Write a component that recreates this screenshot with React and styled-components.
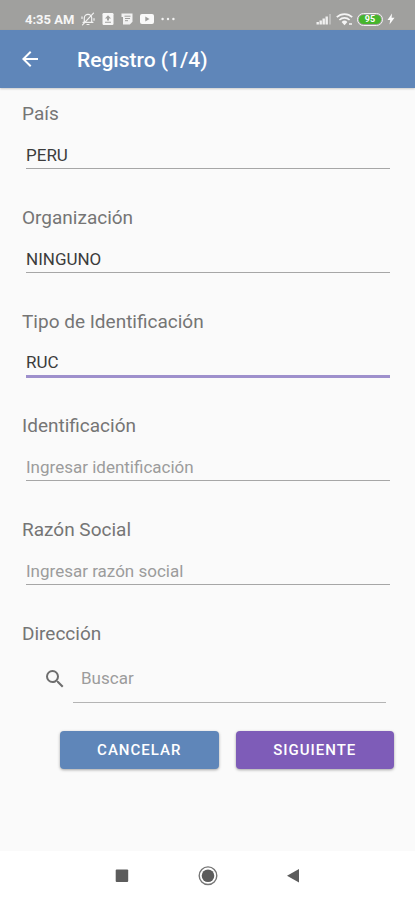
import styled, { createGlobalStyle } from "styled-components"
import { MdArrowBack, MdSearch } from "react-icons/md"

const campos = [
  { id: "pais", label: "País", valor: "PERU" },
  { id: "organizacion", label: "Organización", valor: "NINGUNO" },
  { id: "tipo", label: "Tipo de Identificación", valor: "RUC", activo: true },
  { id: "identificacion", label: "Identificación", placeholder: "Ingresar identificación" },
  { id: "razon", label: "Razón Social", placeholder: "Ingresar razón social" },
]

export default function App() {
  return (
    <Screen>
      <GlobalStyle />
      <StatusBar>
        <StatusGroup>
          <span>4:35 AM</span>
          <MutedIcon />
          <UploadIcon />
          <NoteIcon />
          <VideoIcon />
          <DotsIcon />
        </StatusGroup>
        <StatusIcons>
          <SignalIcon />
          <WifiIcon />
          <Battery><BatteryLevel>95</BatteryLevel></Battery>
          <BoltIcon />
        </StatusIcons>
      </StatusBar>

      <Header>
        <BackButton type="button" aria-label="Volver"><MdArrowBack /></BackButton>
        <h1>Registro (1/4)</h1>
      </Header>

      <Form onSubmit={(e) => e.preventDefault()}>
        {campos.map((campo) => (
          <Field key={campo.id}>
            <Label htmlFor={campo.id}>{campo.label}</Label>
            <Input
              id={campo.id}
              type="text"
              defaultValue={campo.valor}
              placeholder={campo.placeholder}
              $activo={campo.activo}
            />
          </Field>
        ))}

        <Label htmlFor="direccion">Dirección</Label>
        <SearchRow>
          <MdSearch />
          <SearchInput id="direccion" type="search" placeholder="Buscar" />
        </SearchRow>

        <ButtonsContainer>
          <Button type="button" $color="#5f86b9">Cancelar</Button>
          <Button type="submit" $color="#7e5cb8">Siguiente</Button>
        </ButtonsContainer>
      </Form>

      <NavBar>
        <NavButton type="button" aria-label="Recientes">
          <svg width="20" height="20" viewBox="0 0 20 20"><rect x="3.7" y="3.5" width="12.5" height="12.5" rx="1" fill="#5c5c5c" /></svg>
        </NavButton>
        <NavButton type="button" aria-label="Inicio">
          <svg width="20" height="20" viewBox="0 0 20 20">
            <circle cx="10" cy="9.7" r="8.8" fill="none" stroke="#757575" strokeWidth="1.4" />
            <circle cx="10" cy="9.7" r="6.3" fill="#5c5c5c" />
          </svg>
        </NavButton>
        <NavButton type="button" aria-label="Atrás">
          <svg width="20" height="20" viewBox="0 0 20 20"><path d="M3 9.7L15 3v13.4z" fill="#5c5c5c" /></svg>
        </NavButton>
      </NavBar>
    </Screen>
  )
}

function MutedIcon() {
  return (
    <svg width="14" height="14" viewBox="0 0 14 14" fill="none" stroke="#f2f2f2" strokeWidth="1.2" strokeLinecap="round">
      <path d="M3.3 9.8V6a3.7 3.7 0 0 1 7.4 0v3.8M2 10.3h10M6 12.5h2M1.5 12.8L12.5 1.2M1 6.5V4.8M13 6.5v1.7" />
    </svg>
  )
}

function UploadIcon() {
  return (
    <svg width="12" height="12" viewBox="0 0 12 12">
      <rect x="0.5" width="11" height="12" rx="1.2" fill="#f6f6f6" />
      <path d="M6 2.3L9 5.5H7v2H5v-2H3zM3 8.7h6v1H3z" fill="#9f9f9d" />
    </svg>
  )
}

function NoteIcon() {
  return (
    <svg width="12" height="12" viewBox="0 0 12 12">
      <path d="M0.5 0.5h11v8.3l-2.7 2.7H2V4H0.5z" fill="#f2f2f2" />
      <path d="M3.5 3.2h6M4 5.5h5M4 7.7h3" stroke="#9f9f9d" strokeWidth="1" />
    </svg>
  )
}

function VideoIcon() {
  return (
    <svg width="14" height="12" viewBox="0 0 14 12">
      <rect y="1" width="14" height="10" rx="2" fill="#f9f9f9" />
      <path d="M5.3 3.6v4.8L9.5 6z" fill="#9f9f9d" />
    </svg>
  )
}

function DotsIcon() {
  return (
    <svg width="14" height="12" viewBox="0 0 14 12" fill="#f2f2f2">
      <circle cx="1.6" cy="6" r="1.2" />
      <circle cx="7" cy="6" r="1.2" />
      <circle cx="12.4" cy="6" r="1.2" />
    </svg>
  )
}

function SignalIcon() {
  return (
    <svg width="16" height="12" viewBox="0 0 16 12" fill="#f0f0f0">
      <path d="M0.5 9h2.4v2.5H0.5zM3.5 7.5h2.4v4H3.5zM6.5 5.5h2.4v6H6.5zM9.5 3.5h2.4v8H9.5z" />
      <path d="M13 1h2v10.5h-2z" opacity="0.35" />
    </svg>
  )
}

function WifiIcon() {
  return (
    <svg width="17" height="13" viewBox="0 0 17 13" fill="none" stroke="#f5f5f5" strokeWidth="1.7">
      <path d="M0.8 4.2a11 11 0 0 1 15.4 0M3.4 7a7.3 7.3 0 0 1 10.2 0" />
      <path d="M5.6 9a4.2 4.2 0 0 1 5.8 0L8.5 12.3z" fill="#f5f5f5" stroke="none" />
      <path d="M13 11h3" strokeWidth="1.5" />
    </svg>
  )
}

function BoltIcon() {
  return (
    <svg width="8" height="12" viewBox="0 0 8 12"><path d="M5 0.5L0.5 7h2.7L2.5 11.5 7.5 4.7H4.6z" fill="#fafafa" /></svg>
  )
}

const GlobalStyle = createGlobalStyle`
  * {
    box-sizing: border-box;
  }
  body {
    margin: 0;
    background-color: #fafafa;
    font-family: Roboto, "Liberation Sans", sans-serif;
  }
  button, input {
    font-family: inherit;
  }
`
const Screen = styled.div`
  display: flex;
  flex-direction: column;
  min-height: 100vh;
`
const StatusBar = styled.div`
  display: flex;
  align-items: flex-end;
  justify-content: space-between;
  height: 30px;
  padding: 0 20px 3px 25px;
  background-color: #a0a09e;
  color: #f6f6f6;
`
const StatusGroup = styled.div`
  display: flex;
  align-items: center;
  gap: 7px;
  height: 16px;
  font-size: 13px;
  font-weight: 700;
`
const StatusIcons = styled(StatusGroup)`
  gap: 4px;
`
const Battery = styled.div`
  width: 26px;
  height: 13px;
  padding: 1px;
  border: 1px solid #f4f4f4;
  border-radius: 7px;
`
const BatteryLevel = styled.div`
  height: 9px;
  border-radius: 5px;
  background-color: #45b52c;
  color: white;
  font-size: 9px;
  font-weight: 700;
  line-height: 9px;
  text-align: center;
`
const Header = styled.header`
  display: flex;
  align-items: center;
  gap: 35px;
  height: 58px;
  padding: 2px 18px 0;
  background-color: #5f86b9;
  box-shadow: 0 1px 2px rgba(0, 0, 0, 0.2);
  color: white;
  h1 {
    margin: 0;
    font-size: 21px;
    font-weight: 500;
  }
`
const BackButton = styled.button`
  display: flex;
  padding: 0 0 2px;
  border: none;
  background: none;
  color: white;
  font-size: 24px;
`
const Form = styled.form`
  flex-grow: 1;
  padding: 14px 21px 24px 22px;
`
const Field = styled.div`
  height: 104px;
`
const Label = styled.label`
  display: block;
  font-size: 19px;
  line-height: 24px;
  color: #757575;
`
const Input = styled.input`
  display: block;
  width: calc(100% - 8px);
  height: ${(props) => (props.$activo ? "29px" : "28px")};
  margin: 15px 4px 0;
  padding: 0;
  border: none;
  border-bottom: ${(props) => (props.$activo ? "3px solid #9e90cc" : "1px solid #a6a6a6")};
  border-radius: 0;
  outline: none;
  background: none;
  font-size: 17px;
  color: #3c3c3c;
  &::placeholder {
    color: #9c9c9c;
    opacity: 1;
  }
`
const SearchRow = styled.div`
  display: flex;
  align-items: center;
  gap: 6px;
  padding: 8px 8px 0 21px;
  svg {
    flex-shrink: 0;
    font-size: 24px;
    color: #6e6e6e;
  }
`
const SearchInput = styled.input`
  flex-grow: 1;
  min-width: 0;
  height: 49px;
  padding: 0 8px;
  border: none;
  border-bottom: 1px solid #b4b4b4;
  border-radius: 0;
  outline: none;
  appearance: none;
  background: none;
  font-size: 17px;
  color: #3c3c3c;
  &::placeholder {
    color: #9c9c9c;
    opacity: 1;
  }
`
const ButtonsContainer = styled.div`
  display: flex;
  gap: 17px;
  margin-top: 28px;
  padding-left: 38px;
`
const Button = styled.button`
  flex: 1;
  height: 38px;
  padding: 0;
  border: none;
  border-radius: 4px;
  background-color: ${(props) => props.$color};
  box-shadow: 0 1px 3px rgba(0, 0, 0, 0.35);
  color: white;
  font-size: 15px;
  font-weight: 500;
  letter-spacing: 1px;
  text-transform: uppercase;
`
const NavBar = styled.nav`
  display: flex;
  align-items: center;
  justify-content: center;
  gap: 66px;
  height: 49px;
  background-color: white;
`
const NavButton = styled.button`
  display: flex;
  padding: 0;
  border: none;
  background: none;
`
